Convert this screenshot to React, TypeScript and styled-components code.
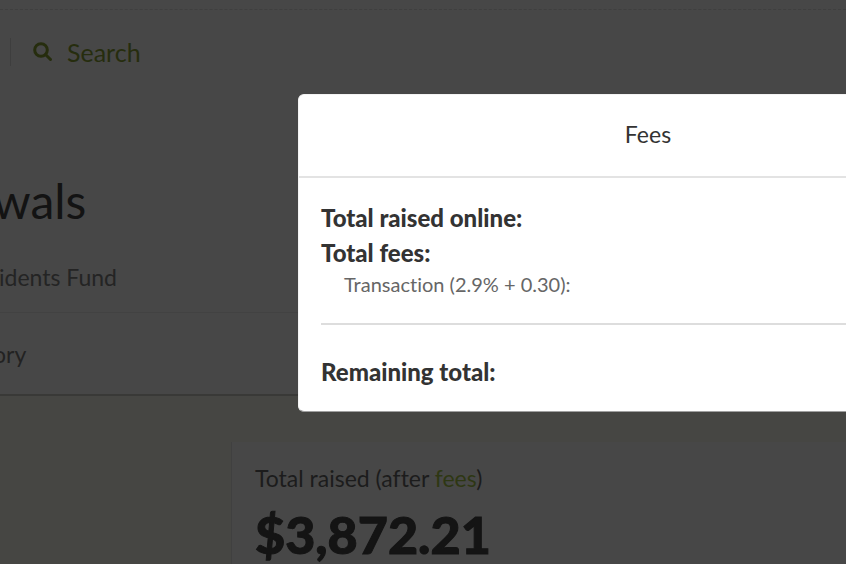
import React from "react";
import styled, { createGlobalStyle } from "styled-components";

const GlobalStyle = createGlobalStyle`
  * { box-sizing: border-box; }
  body {
    margin: 0;
    overflow: hidden;
    background: #474747;
    color: #1c1c1c;
    font-family: Lato, "Open Sans", sans-serif;
    font-size: 23px;
    font-variant-ligatures: none;
    line-height: 32px;
  }
`;

const Page = styled.div`
  display: flex;
  flex-direction: column;
  min-height: 100vh;
  overflow: hidden;
  border-bottom: 2px solid #483f45;
`;

const TopBar = styled.header`
  margin-top: 9px;
  padding-top: 28px;
  border-top: 1px dashed #3f3f3f;
`;

const Nav = styled.nav`
  display: flex;
  align-items: center;
  height: 28px;
  margin-left: 10px;
  padding-left: 22px;
  border-left: 1px solid #3e3e3e;
`;

const SearchLink = styled.a`
  display: flex;
  align-items: center;
  gap: 14px;
  color: #262d0e;
  font-size: 25px;
  text-decoration: none;
`;

const Heading = styled.section`
  margin-left: -7px;
  padding-top: 107px;
`;

const Title = styled.h1`
  margin: 0;
  color: #131313;
  font-size: 48px;
  font-weight: 400;
  line-height: 56px;
`;

const Subtitle = styled.p`
  margin: 32px 0 0;
  padding: 0 0 19px 6px;
  color: #242424;
`;

const Tabs = styled.nav`
  height: 84px;
  margin-left: -7px;
  padding: 25px 0 0;
  border-top: 1px solid #424242;
  border-bottom: 2px solid #393937;
`;

const Tab = styled.a`
  color: #222222;
  text-decoration: none;
`;

const Summary = styled.main`
  flex: 1;
  padding: 46px 0 0 231px;
  background: #464643;
`;

const Card = styled.section`
  height: 100%;
  padding: 20px 24px 0 23px;
  border-left: 1px solid #404040;
  background: #474747;
`;

const CardLabel = styled.p`
  margin: 0;
`;

const FeesLink = styled.a`
  color: #2e3713;
  text-decoration: none;
`;

const Amount = styled.strong`
  display: block;
  color: #141414;
  font-size: 52px;
  font-weight: 900;
  line-height: 80px;
  -webkit-text-stroke: 1px #141414;
`;

const Overlay = styled.div`
  position: fixed;
  inset: 0;
  display: flex;
  align-items: flex-start;
  overflow: hidden;
  padding: 94px 0 0 298px;
`;

const Dialog = styled.div`
  flex: 0 0 700px;
  border: 1px solid #f4f4f4;
  border-bottom-color: #a0a0a0;
  border-radius: 6px;
  background: #ffffff;
  color: #333333;
`;

const DialogTitle = styled.h2`
  margin: 0;
  padding: 23px 0 26px;
  border-bottom: 2px solid #e3e3e3;
  font-size: 23px;
  font-weight: 400;
  line-height: 32px;
  text-align: center;
`;

const DialogBody = styled.dl`
  margin: 0;
  padding: 22px;
`;

const Total = styled.dt`
  font-size: 24px;
  font-weight: 900;
  line-height: 35px;
`;

const Detail = styled.dt`
  padding-left: 23px;
  color: #666666;
  font-size: 20px;
  line-height: 28px;
`;

const Rule = styled.hr`
  margin: 25px 0 29px;
  border: 0;
  border-top: 2px solid #dddddd;
`;

export default function App() {
  return (
    <>
      <GlobalStyle />
      <Page>
        <TopBar>
          <Nav>
            <SearchLink href="#search">
              <svg width="20" height="20" viewBox="0 0 20 20" fill="none" stroke="currentColor" strokeWidth="3" aria-hidden="true">
                <circle cx="8" cy="8" r="6.3" />
                <path d="M12.5 12.5L17.5 17.5" strokeLinecap="round" />
              </svg>
              Search
            </SearchLink>
          </Nav>
        </TopBar>
        <Heading>
          <Title>wals</Title>
          <Subtitle>idents Fund</Subtitle>
        </Heading>
        <Tabs>
          <Tab href="#history">ory</Tab>
        </Tabs>
        <Summary>
          <Card>
            <CardLabel>
              Total raised (after <FeesLink href="#fees">fees</FeesLink>)
            </CardLabel>
            <Amount>$3,872.21</Amount>
          </Card>
        </Summary>
      </Page>
      <Overlay>
        <Dialog role="dialog" aria-labelledby="fees-title">
          <DialogTitle id="fees-title">Fees</DialogTitle>
          <DialogBody>
            <Total>Total raised online:</Total>
            <Total>Total fees:</Total>
            <Detail>Transaction (2.9% + 0.30):</Detail>
            <Rule />
            <Total>Remaining total:</Total>
          </DialogBody>
        </Dialog>
      </Overlay>
    </>
  );
}
